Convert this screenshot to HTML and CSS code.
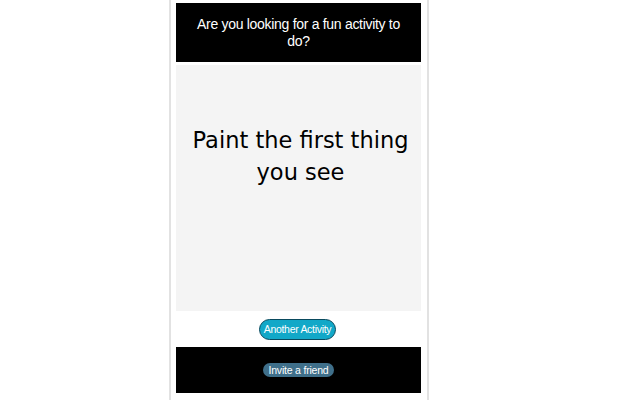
FILE: index.html
```html
<!DOCTYPE html>
<html>
<head>
<meta charset="utf-8">
<link rel="stylesheet" href="styles.css">
</head>
<body>
  <div class="card">
    <header class="head">
      <h1 class="title">Are you looking for a fun activity to do?</h1>
    </header>
    <section class="stage">
      <p class="activity">Paint the first thing you see</p>
    </section>
    <div class="actions">
      <button class="btn-another">Another Activity</button>
    </div>
    <footer class="foot">
      <button class="btn-invite">Invite a friend</button>
    </footer>
  </div>
</body>
</html>
```

FILE: styles.css
```css
html, body {
  margin: 0;
  padding: 0;
  background: #ffffff;
  height: 100%;
  overflow: hidden;
}
body {
  font-family: "Liberation Sans", Arial, sans-serif;
}
.card {
  box-sizing: border-box;
  width: 260px;
  height: 400px;
  margin-left: 169px;
  padding: 3px 6px 0 5px;
  border-left: 2px solid #e2e2e2;
  border-right: 2px solid #e2e2e2;
  background: #fff;
  display: flex;
  flex-direction: column;
}
.head {
  background: #000;
  height: 59px;
  display: flex;
  align-items: center;
  justify-content: center;
  padding: 0 16px;
}
.title {
  margin: 0;
  color: #fff;
  font-weight: normal;
  font-size: 14px;
  letter-spacing: -0.3px;
  line-height: 16.5px;
  text-align: center;
}
.stage {
  margin-top: 3px;
  height: 246px;
  background: #f4f4f4;
  padding-top: 59px;
  box-sizing: border-box;
}
.activity {
  margin: 0;
  font-family: "Comic Sans MS", "DejaVu Sans", sans-serif;
  font-size: 22.5px;
  line-height: 32px;
  text-align: center;
  color: #000;
  padding: 0 4px 0 8px;
}
.actions {
  height: 36px;
  display: flex;
  align-items: center;
  justify-content: center;
}
.btn-another {
  font-family: "Liberation Sans", Arial, sans-serif;
  font-size: 10.5px;
  letter-spacing: -0.3px;
  color: #fff;
  background: #12a8c8;
  border: 1px solid #0a4a5e;
  border-radius: 11px;
  height: 21px;
  padding: 0 4px;
  margin-left: -2px;
}
.foot {
  background: #000;
  height: 46px;
  display: flex;
  align-items: center;
  justify-content: center;
}
.btn-invite {
  font-family: "Liberation Sans", Arial, sans-serif;
  font-size: 10.5px;
  letter-spacing: -0.2px;
  color: #fff;
  background: #3f6f8a;
  border: none;
  border-radius: 7px;
  height: 14px;
  line-height: 14px;
  padding: 0 5px;
  margin-top: -1px;
}
```
